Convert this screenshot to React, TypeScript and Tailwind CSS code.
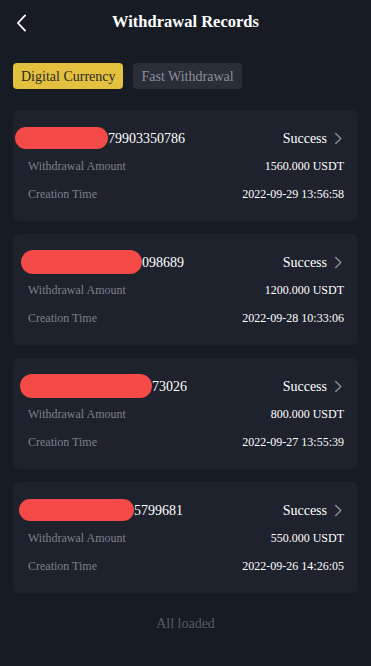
import React from "react";

const records = [
  { id: "79903350786", blob: "ml-[-13px] w-[93px] h-[22px]", amount: "1560.000 USDT", time: "2022-09-29 13:56:58" },
  { id: "098689", blob: "ml-[-7px] w-[121px] h-[24px]", amount: "1200.000 USDT", time: "2022-09-28 10:33:06" },
  { id: "73026", blob: "ml-[-8px] w-[132px] h-[24px]", amount: "800.000 USDT", time: "2022-09-27 13:55:39" },
  { id: "5799681", blob: "ml-[-9px] w-[115px] h-[22px]", amount: "550.000 USDT", time: "2022-09-26 14:26:05" },
];

function Chevron({ className }: { className?: string }) {
  return (
    <svg viewBox="0 0 10 14" className={className} fill="none" stroke="currentColor" strokeWidth="1.5" strokeLinecap="round" strokeLinejoin="round">
      <path d="M2.5 1.5l5.5 5.5-5.5 5.5" />
    </svg>
  );
}

export default function App() {
  return (
    <div className="min-h-[666px] w-[371px] bg-[#171b23] font-[family-name:Liberation_Serif,Times_New_Roman,serif] text-white">
      <div className="relative flex h-[44px] items-center justify-center">
        <svg viewBox="0 0 12 20" className="absolute left-[16px] top-[14px] h-[18px] w-[11px]" fill="none" stroke="#ffffff" strokeWidth="2" strokeLinecap="round" strokeLinejoin="round">
          <path d="M10 1.5L2 10l8 8.5" />
        </svg>
        <div className="pt-[1px] text-[16.5px] font-bold text-white">Withdrawal Records</div>
      </div>
      <div className="mt-[19px] flex gap-[10px] px-[13px]">
        <div className="flex h-[26px] items-center rounded-[4px] bg-[#e4c03f] px-[8px] text-[14px] text-[#2a2a2a]">Digital Currency</div>
        <div className="flex h-[26px] items-center rounded-[4px] bg-[#2a2e39] px-[8px] text-[14px] text-[#8a8e98]">Fast Withdrawal</div>
      </div>
      <div className="mt-[21px] flex flex-col gap-[13px] px-[13px]">
        {records.map((r, i) => (
          <div key={i} className="h-[111px] rounded-[6px] bg-[#1e222c] pl-[15px] pr-[14px] pt-[15px]">
            <div className="flex h-[26px] items-center justify-between">
              <div className="flex items-center text-[14px] text-white">
                <span className={`inline-block rounded-full bg-[#f44a47] ${r.blob}`} />
                <span>{r.id}</span>
              </div>
              <div className="mr-[1px] flex items-center gap-[6px] text-[14px] text-white">
                <span>Success</span>
                <Chevron className="h-[13px] w-[10px] text-[#8a8e98]" />
              </div>
            </div>
            <div className="mt-[1px] flex h-[28px] items-center justify-between text-[12px]">
              <span className="text-[#7c808a]">Withdrawal Amount</span>
              <span className="text-white">{r.amount}</span>
            </div>
            <div className="flex h-[27px] items-center justify-between text-[12px]">
              <span className="text-[#7c808a]">Creation Time</span>
              <span className="text-white">{r.time}</span>
            </div>
          </div>
        ))}
      </div>
      <div className="mt-[20px] text-center text-[14px] text-[#585c66]">All loaded</div>
    </div>
  );
}
